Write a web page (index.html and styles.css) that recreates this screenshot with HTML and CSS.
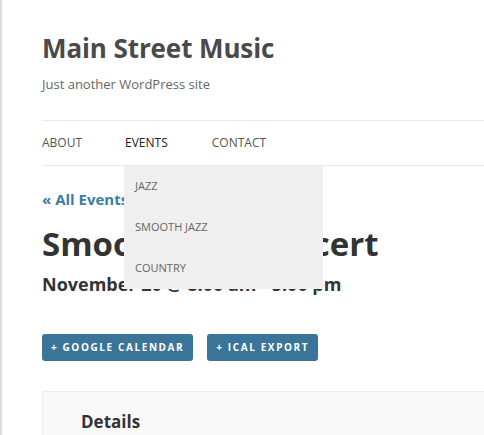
FILE: index.html
```html
<!DOCTYPE html>
<html lang="en">

<head>
    <meta charset="UTF-8">
    <meta name="viewport" content="width=device-width, initial-scale=1.0">
    <title>Smooth Jazz Concert | Main Street Music</title>
    <link rel="stylesheet" href="styles.css">
</head>

<body>

    <div class="page">
        <header class="site-header">
            <h1 class="site-title">Main Street Music</h1>
            <p class="site-description">Just another WordPress site</p>
        </header>

        <!-- Main menu -->
        <nav class="main-nav">
            <ul class="menu">
                <li><a href="#">About</a></li>
                <li class="has-sub open">
                    <a href="#" class="current">Events</a>
                    <ul class="sub-menu">
                        <li><a href="#">Jazz</a></li>
                        <li><a href="#">Smooth Jazz</a></li>
                        <li><a href="#">Country</a></li>
                    </ul>
                </li>
                <li><a href="#">Contact</a></li>
            </ul>
        </nav>

        <main class="event">
            <p class="back-link"><a href="#">&laquo; All Events</a></p>
            <h2 class="event-title">Smooth Jazz Concert</h2>
            <h3 class="event-date">November 20 @ 8:00 am - 5:00 pm</h3>

            <div class="event-buttons">
                <a href="#" class="btn">+ Google Calendar</a>
                <a href="#" class="btn">+ iCal Export</a>
            </div>

            <div class="event-meta">
                <h4>Details</h4>
            </div>
        </main>
    </div>

</body>

</html>
```

FILE: styles.css
```css
* {
    box-sizing: border-box;
}

html, body {
    margin: 0;
    padding: 0;
}

body {
    font-family: 'Open Sans', 'Noto Sans', sans-serif;
    background-color: #fff;
    color: #333;
    border-left: 2px solid #ddd;
    height: 435px;
    overflow: hidden;
}

a {
    text-decoration: none;
}

.page {
    padding: 30px 0 0 40px;
}

.site-header {
    padding-bottom: 27px;
}

.site-title {
    margin: 0;
    font-size: 26px;
    line-height: 36px;
    font-weight: 700;
    color: #4a4a4a;
    letter-spacing: -0.1px;
}

.site-description {
    margin: 9px 0 0;
    font-size: 13px;
    line-height: 18px;
    color: #666;
}

/* Main menu */
.main-nav {
    border-top: 1px solid #eaeaea;
    border-bottom: 1px solid #eaeaea;
}

.menu {
    list-style: none;
    margin: 0;
    padding: 0;
    display: flex;
}

.menu > li {
    position: relative;
}

.menu > li > a {
    display: block;
    padding: 0 43px 0 0;
    line-height: 44px;
    font-size: 12px;
    text-transform: uppercase;
    color: #555;
}

.menu > li:nth-child(2) > a {
    padding-right: 44px;
}

.menu > li > a.current {
    color: #222;
}

.sub-menu {
    display: none;
    position: absolute;
    top: 45px;
    left: -1px;
    width: 199px;
    list-style: none;
    margin: 0;
    padding: 0;
    background-color: #efefef;
    z-index: 10;
}

.has-sub.open .sub-menu {
    display: block;
}

.sub-menu a {
    display: block;
    padding: 0 10px 1px 11px;
    line-height: 40px;
    font-size: 11px;
    text-transform: uppercase;
    color: #666;
}

/* Event */
.back-link {
    margin: 22px 0 0;
    font-size: 15px;
    line-height: 22px;
    font-weight: 700;
}

.back-link a {
    color: #3a7ca5;
}

.event-title {
    margin: 14px 0 0;
    font-size: 33px;
    line-height: 40px;
    font-weight: 700;
    color: #333;
}

.event-date {
    margin: 7px 0 0;
    font-size: 18px;
    line-height: 26px;
    font-weight: 700;
    color: #333;
}

.event-buttons {
    display: flex;
    gap: 14px;
    margin-top: 37px;
}

.btn {
    display: block;
    background-color: #3a7599;
    color: #fff;
    padding: 0 9px;
    line-height: 27px;
    font-size: 10px;
    font-weight: 700;
    letter-spacing: 1.6px;
    text-transform: uppercase;
    border-radius: 3px;
}

.event-meta {
    margin-top: 30px;
    background-color: #f9f9f9;
    border-top: 1px solid #ececec;
    border-left: 1px solid #ececec;
    padding: 18px 0 0 38px;
    height: 80px;
}

.event-meta h4 {
    margin: 0;
    font-size: 17px;
    line-height: 24px;
    font-weight: 700;
    color: #333;
}
```
